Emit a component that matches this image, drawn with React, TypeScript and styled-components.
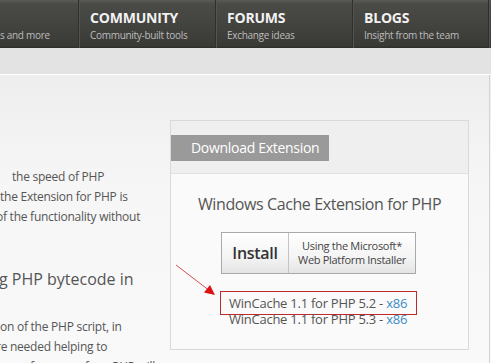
import React from "react";
import styled, { createGlobalStyle } from "styled-components";

const Global = createGlobalStyle`
  html, body { margin: 0; padding: 0; }
  body {
    width: 491px;
    height: 363px;
    overflow: hidden;
    background: #f7f7f7;
    font-family: "Open Sans", "DejaVu Sans", sans-serif;
  }
`;

const Page = styled.div`
  width: 491px;
  height: 363px;
  overflow: hidden;
  display: flex;
  flex-direction: column;
`;

const Header = styled.div`
  height: 48px;
  flex: none;
  display: flex;
  background: linear-gradient(#5a5a57 0px, #4a4a47 4px, #434340 24px, #393936 46px, #2c2c2a 48px);
`;

const NavItem = styled.div<{ $w: number; $pad: number }>`
  width: ${(p) => p.$w}px;
  flex: none;
  box-sizing: border-box;
  padding-left: ${(p) => p.$pad}px;
  padding-top: 9px;
  border-right: 1px solid #2f2f2d;
  box-shadow: 1px 0 0 #55554f;
  white-space: nowrap;
  overflow: hidden;
`;

const NavTitle = styled.div`
  height: 17px;
  font-size: 14px;
  font-weight: 700;
  color: #f2f2f2;
  line-height: 17px;
  letter-spacing: -0.2px;
`;

const NavSub = styled.div`
  margin-top: 2px;
  font-size: 10px;
  line-height: 14px;
  color: #bdbdbb;
  letter-spacing: -0.3px;
`;

const Band = styled.div`
  height: 26px;
  flex: none;
  background: #e3e3e3;
  border-bottom: 1px solid #ffffff;
`;

const Content = styled.div`
  flex: 1;
  display: flex;
  background: linear-gradient(#eeeeee 0px, #f6f6f6 110px, #f9f9f9 288px);
  position: relative;
`;

const TextCol = styled.div`
  width: 170px;
  flex: none;
  padding-top: 92px;
  color: #555555;
  overflow: hidden;
`;

const Line = styled.div<{ $indent: number }>`
  margin-left: ${(p) => p.$indent}px;
  font-size: 12px;
  line-height: 20px;
  height: 20px;
  white-space: nowrap;
  letter-spacing: -0.25px;
`;

const Heading = styled.div`
  margin-top: 40px;
  font-size: 16px;
  line-height: 24px;
  height: 24px;
  white-space: nowrap;
  margin-left: -1px;
`;

const Para = styled.div`
  margin-top: 26px;
`;

const PanelWrap = styled.div`
  padding-top: 45px;
  width: 299px;
  flex: none;
`;

const Panel = styled.div`
  box-sizing: border-box;
  width: 299px;
  height: 230px;
  border: 1px solid #d9d9d9;
  background: #fafafa;
  display: flex;
  flex-direction: column;
`;

const PanelHead = styled.div`
  height: 53px;
  flex: none;
  background: #efefef;
  border-bottom: 1px solid #e2e2e2;
  padding-top: 14px;
  box-sizing: border-box;
`;

const Tab = styled.div`
  width: 158px;
  height: 26px;
  background: #9a9a9a;
  color: #ffffff;
  font-size: 14px;
  line-height: 26px;
  padding-left: 20px;
  box-sizing: border-box;
  white-space: nowrap;
  letter-spacing: -0.3px;
`;

const PanelBody = styled.div`
  display: flex;
  flex-direction: column;
  align-items: flex-start;
  padding-left: 50px;
`;

const Product = styled.div`
  margin-top: 19px;
  margin-left: -23px;
  font-size: 16px;
  line-height: 22px;
  color: #555555;
  white-space: nowrap;
  letter-spacing: -0.4px;
`;

const InstallBtn = styled.div`
  margin-top: 17px;
  width: 195px;
  height: 42px;
  box-sizing: border-box;
  border: 1px solid #a9a9a9;
  display: flex;
  background: linear-gradient(#ffffff, #f4f4f4 60%, #e4e4e4);
`;

const InstallLabel = styled.div`
  width: 66px;
  flex: none;
  border-right: 1px solid #c4c4c4;
  display: flex;
  align-items: center;
  justify-content: center;
  font-size: 16px;
  font-weight: 600;
  color: #333333;
  letter-spacing: -0.3px;
`;

const InstallNote = styled.div`
  flex: 1;
  display: flex;
  flex-direction: column;
  justify-content: center;
  align-items: center;
  font-size: 11px;
  line-height: 14px;
  color: #444444;
  letter-spacing: -0.3px;
  white-space: nowrap;
`;

const Links = styled.div`
  margin-top: 17px;
  width: 197px;
  margin-left: -1px;
`;

const LinkRow = styled.div<{ $boxed?: boolean }>`
  box-sizing: border-box;
  height: ${(p) => (p.$boxed ? "24px" : "15px")};
  line-height: ${(p) => (p.$boxed ? "22px" : "13px")};
  padding-left: 8px;
  border: 1px solid ${(p) => (p.$boxed ? "#bb2b2e" : "transparent")};
  border-top-width: ${(p) => (p.$boxed ? "1px" : "0")};
  border-bottom-width: ${(p) => (p.$boxed ? "1px" : "0")};
  font-size: 13px;
  color: #555555;
  white-space: nowrap;
  letter-spacing: -0.25px;
  margin-top: ${(p) => (p.$boxed ? "0" : "-2px")};
`;

const Arch = styled.span`
  color: #3a8cc6;
`;

const EdgeLine = styled.div`
  margin-left: 20px;
  width: 1px;
  background: #d4d4d4;
  flex: none;
`;

const Arrow = styled.svg`
  position: absolute;
  left: 170px;
  top: 185px;
  width: 50px;
  height: 40px;
  pointer-events: none;
`;

export default function App() {
  return (
    <Page>
      <Global />
      <Header>
        <NavItem $w={79} $pad={0}>
          <NavTitle />
          <NavSub>s and more</NavSub>
        </NavItem>
        <NavItem $w={137} $pad={11}>
          <NavTitle>COMMUNITY</NavTitle>
          <NavSub>Community-built tools</NavSub>
        </NavItem>
        <NavItem $w={137} $pad={11}>
          <NavTitle>FORUMS</NavTitle>
          <NavSub>Exchange ideas</NavSub>
        </NavItem>
        <NavItem $w={136} $pad={11}>
          <NavTitle>BLOGS</NavTitle>
          <NavSub>Insight from the team</NavSub>
        </NavItem>
      </Header>
      <Band />
      <Content>
        <TextCol>
          <Line $indent={12}>the speed of PHP</Line>
          <Line $indent={0}>the Extension for PHP is</Line>
          <Line $indent={-4}>of the functionality without</Line>
          <Heading>g PHP bytecode in</Heading>
          <Para>
            <Line $indent={0}>on of the PHP script, in</Line>
            <Line $indent={-4}>re needed helping to</Line>
            <Line $indent={-3}>ce performance for a PHP will</Line>
          </Para>
        </TextCol>
        <PanelWrap>
          <Panel>
            <PanelHead>
              <Tab>Download Extension</Tab>
            </PanelHead>
            <PanelBody>
              <Product>Windows Cache Extension for PHP</Product>
              <InstallBtn>
                <InstallLabel>Install</InstallLabel>
                <InstallNote>
                  <span>Using the Microsoft*</span>
                  <span>Web Platform Installer</span>
                </InstallNote>
              </InstallBtn>
              <Links>
                <LinkRow $boxed>
                  WinCache 1.1 for PHP 5.2 - <Arch>x86</Arch>
                </LinkRow>
                <LinkRow>
                  WinCache 1.1 for PHP 5.3 - <Arch>x86</Arch>
                </LinkRow>
              </Links>
            </PanelBody>
          </Panel>
        </PanelWrap>
        <EdgeLine />
        <Arrow viewBox="0 0 50 40">
          <line x1="6" y1="5" x2="40" y2="31" stroke="#cc2222" strokeWidth="0.8" />
          <polygon points="45,35 34,32.5 40,25" fill="#dd1111" />
        </Arrow>
      </Content>
    </Page>
  );
}
